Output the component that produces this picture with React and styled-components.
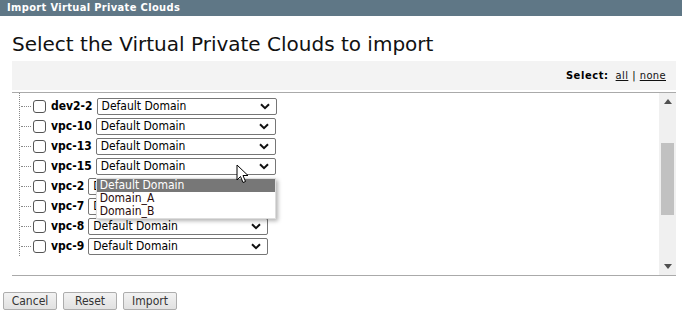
import React from "react";
import styled, { createGlobalStyle } from "styled-components";

const GlobalStyle = createGlobalStyle`
  html, body {
    margin: 0;
    padding: 0;
    background: #fff;
    font-family: "DejaVu Sans Condensed", "DejaVu Sans", sans-serif;
    color: #000;
  }
`;

const Page = styled.div`
  width: 682px;
  height: 325px;
  overflow: hidden;
  position: relative;
`;

const TitleBar = styled.div`
  height: 16px;
  background: #5f7786;
  color: #fff;
  font-weight: bold;
  font-size: 11px;
  letter-spacing: 0.35px;
  line-height: 16px;
  padding-left: 7px;
`;

const Heading = styled.h1`
  margin: 0;
  padding: 15px 0 0 12px;
  height: 30px;
  font-family: "DejaVu Sans", sans-serif;
  font-size: 20px;
  font-weight: normal;
  line-height: 26px;
  color: #111;
`;

const Panel = styled.div`
  margin: 0 6px 0 12px;
`;

const Band = styled.div`
  height: 29px;
  background: #f3f3f3;
  display: flex;
  align-items: center;
  justify-content: flex-end;
  padding-right: 10px;
  font-size: 11px;
  border-bottom: 2px solid #fff;
`;

const SelectLabel = styled.b`
  margin-right: 7px;
  letter-spacing: 0.6px;
`;

const LinkText = styled.a`
  color: #111;
  text-decoration: underline;
  cursor: pointer;
  letter-spacing: 0.4px;
`;

const Pipe = styled.span`
  margin: 0 4px;
`;

const ListFrame = styled.div`
  border-top: 1px solid #aaa;
  border-bottom: 1px solid #aaa;
  height: 182px;
  display: flex;
  position: relative;
`;

const List = styled.div`
  flex: 1;
  padding: 0 0 0 7px;
  overflow: hidden;
`;

const Tree = styled.div`
  border-left: 1px dotted #888;
  height: 163px;
  padding-top: 3px;
  box-sizing: border-box;
  display: flex;
  flex-direction: column;
`;

const Row = styled.div`
  height: 20px;
  flex-shrink: 0;
  display: flex;
  align-items: center;
  padding-left: 1px;
`;

const Twig = styled.span`
  width: 10px;
  border-top: 1px dotted #888;
  margin-right: 2px;
`;

const Check = styled.span`
  width: 11px;
  height: 11px;
  border: 1px solid #555;
  border-radius: 3px;
  background: #fff;
  margin-right: 5px;
`;

const Name = styled.b`
  font-size: 12px;
  margin-right: 4px;
`;

const SelectBox = styled.div`
  width: 168px;
  height: 15px;
  border: 1px solid #767676;
  border-radius: 2px;
  display: flex;
  align-items: center;
  justify-content: space-between;
  padding: 0 6px 0 4px;
  box-sizing: content-box;
  font-size: 12px;
  background: #fff;
  position: relative;
`;

const Chevron = () => (
  <svg width="10" height="7" viewBox="0 0 10 7">
    <path d="M1 1.2 L5 5.2 L9 1.2" fill="none" stroke="#111" strokeWidth="2" />
  </svg>
);

const Menu = styled.div`
  position: absolute;
  left: -1px;
  top: 19px;
  width: 178px;
  background: #fff;
  box-shadow: 2px 2px 4px rgba(0, 0, 0, 0.3);
  border: 1px solid #ddd;
  z-index: 5;
`;

const Option = styled.div`
  height: 13px;
  line-height: 13px;
  padding-left: 3px;
  font-size: 12px;
  color: ${(p) => (p.active ? "#fff" : "#2a0a0a")};
  background: ${(p) => (p.active ? "#777" : "transparent")};
`;

const Cursor = styled.svg`
  position: absolute;
  top: 5px;
  z-index: 6;
`;

const Scrollbar = styled.div`
  width: 17px;
  background: #f0f0f0;
  display: flex;
  flex-direction: column;
  align-items: center;
  justify-content: space-between;
  padding: 6px 0;
  box-sizing: border-box;
  position: relative;
`;

const Thumb = styled.div`
  position: absolute;
  left: 2px;
  top: 50px;
  width: 13px;
  height: 72px;
  background: #c1c1c1;
`;

const Arrow = ({ up }) => (
  <svg width="8" height="5" viewBox="0 0 8 5">
    <path d={up ? "M0 5 L4 0 L8 5 Z" : "M0 0 L8 0 L4 5 Z"} fill="#505050" />
  </svg>
);

const Buttons = styled.div`
  display: flex;
  gap: 6px;
  padding: 16px 0 0 3px;
`;

const Button = styled.button`
  width: 54px;
  height: 18px;
  padding: 0;
  border: 1px solid #adadad;
  border-radius: 2px;
  background: linear-gradient(#f2f2f2, #e1e1e1);
  font-family: "DejaVu Sans Condensed", "DejaVu Sans", sans-serif;
  font-size: 12px;
  color: #333;
`;

const rows = ["dev2-2", "vpc-10", "vpc-13", "vpc-15", "vpc-2", "vpc-7", "vpc-8", "vpc-9"];

export default function App() {
  return (
    <Page>
      <GlobalStyle />
      <TitleBar>Import Virtual Private Clouds</TitleBar>
      <Heading>Select the Virtual Private Clouds to import</Heading>
      <Panel>
        <Band>
          <SelectLabel>Select:</SelectLabel>
          <LinkText>all</LinkText>
          <Pipe>|</Pipe>
          <LinkText>none</LinkText>
        </Band>
        <ListFrame>
          <List>
            <Tree>
              {rows.map((r) => (
                <Row key={r}>
                  <Twig />
                  <Check />
                  <Name>{r}</Name>
                  <SelectBox>
                    <span>Default Domain</span>
                    <Chevron />
                    {r === "vpc-15" && (
                      <>
                        <Cursor style={{ left: 139 }} width="14" height="20" viewBox="0 0 14 20">
                          <path d="M1 1 L1 16 L4.5 12.5 L7 18.5 L9.5 17.5 L7 11.5 L12 11.5 Z" fill="#fff" stroke="#000" strokeWidth="1" strokeLinejoin="round" />
                        </Cursor>
                        <Menu>
                          <Option active>Default Domain</Option>
                          <Option>Domain_A</Option>
                          <Option>Domain_B</Option>
                        </Menu>
                      </>
                    )}
                  </SelectBox>
                </Row>
              ))}
            </Tree>
          </List>
          <Scrollbar>
            <Arrow up />
            <Thumb />
            <Arrow />
          </Scrollbar>
        </ListFrame>
      </Panel>
      <Buttons>
        <Button>Cancel</Button>
        <Button>Reset</Button>
        <Button>Import</Button>
      </Buttons>
    </Page>
  );
}
